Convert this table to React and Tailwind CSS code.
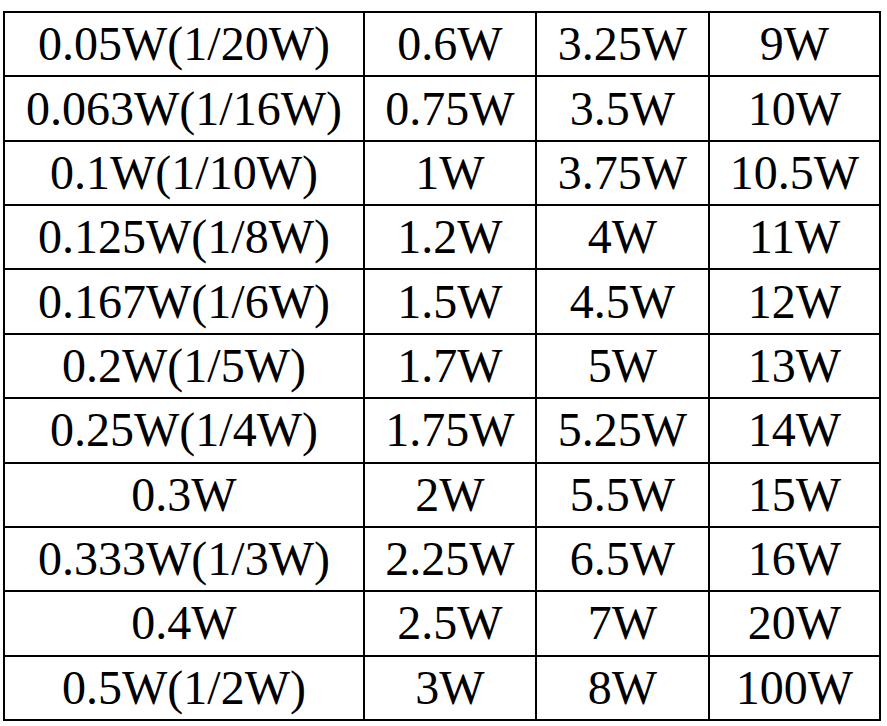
import React from "react";

const rows = [
  ["0.05W(1/20W)", "0.6W", "3.25W", "9W"],
  ["0.063W(1/16W)", "0.75W", "3.5W", "10W"],
  ["0.1W(1/10W)", "1W", "3.75W", "10.5W"],
  ["0.125W(1/8W)", "1.2W", "4W", "11W"],
  ["0.167W(1/6W)", "1.5W", "4.5W", "12W"],
  ["0.2W(1/5W)", "1.7W", "5W", "13W"],
  ["0.25W(1/4W)", "1.75W", "5.25W", "14W"],
  ["0.3W", "2W", "5.5W", "15W"],
  ["0.333W(1/3W)", "2.25W", "6.5W", "16W"],
  ["0.4W", "2.5W", "7W", "20W"],
  ["0.5W(1/2W)", "3W", "8W", "100W"],
];

export default function App() {
  return (
    <div className="w-[887px] h-[726px] bg-white pt-[11px] pl-[3px]">
      <div
        className="grid w-[878px] h-[710px] border-l-2 border-t-2 border-black grid-cols-[360px_172px_173px_171px] grid-rows-[repeat(11,1fr)] text-black text-[48px] leading-none"
        style={{ fontFamily: '"Liberation Serif", "Times New Roman", serif' }}
      >
        {rows.map((r, i) =>
          r.map((c, j) => (
            <div
              key={i + "-" + j}
              className="flex items-center justify-center border-r-2 border-b-2 border-black whitespace-nowrap"
            >
              {c}
            </div>
          ))
        )}
      </div>
    </div>
  );
}
